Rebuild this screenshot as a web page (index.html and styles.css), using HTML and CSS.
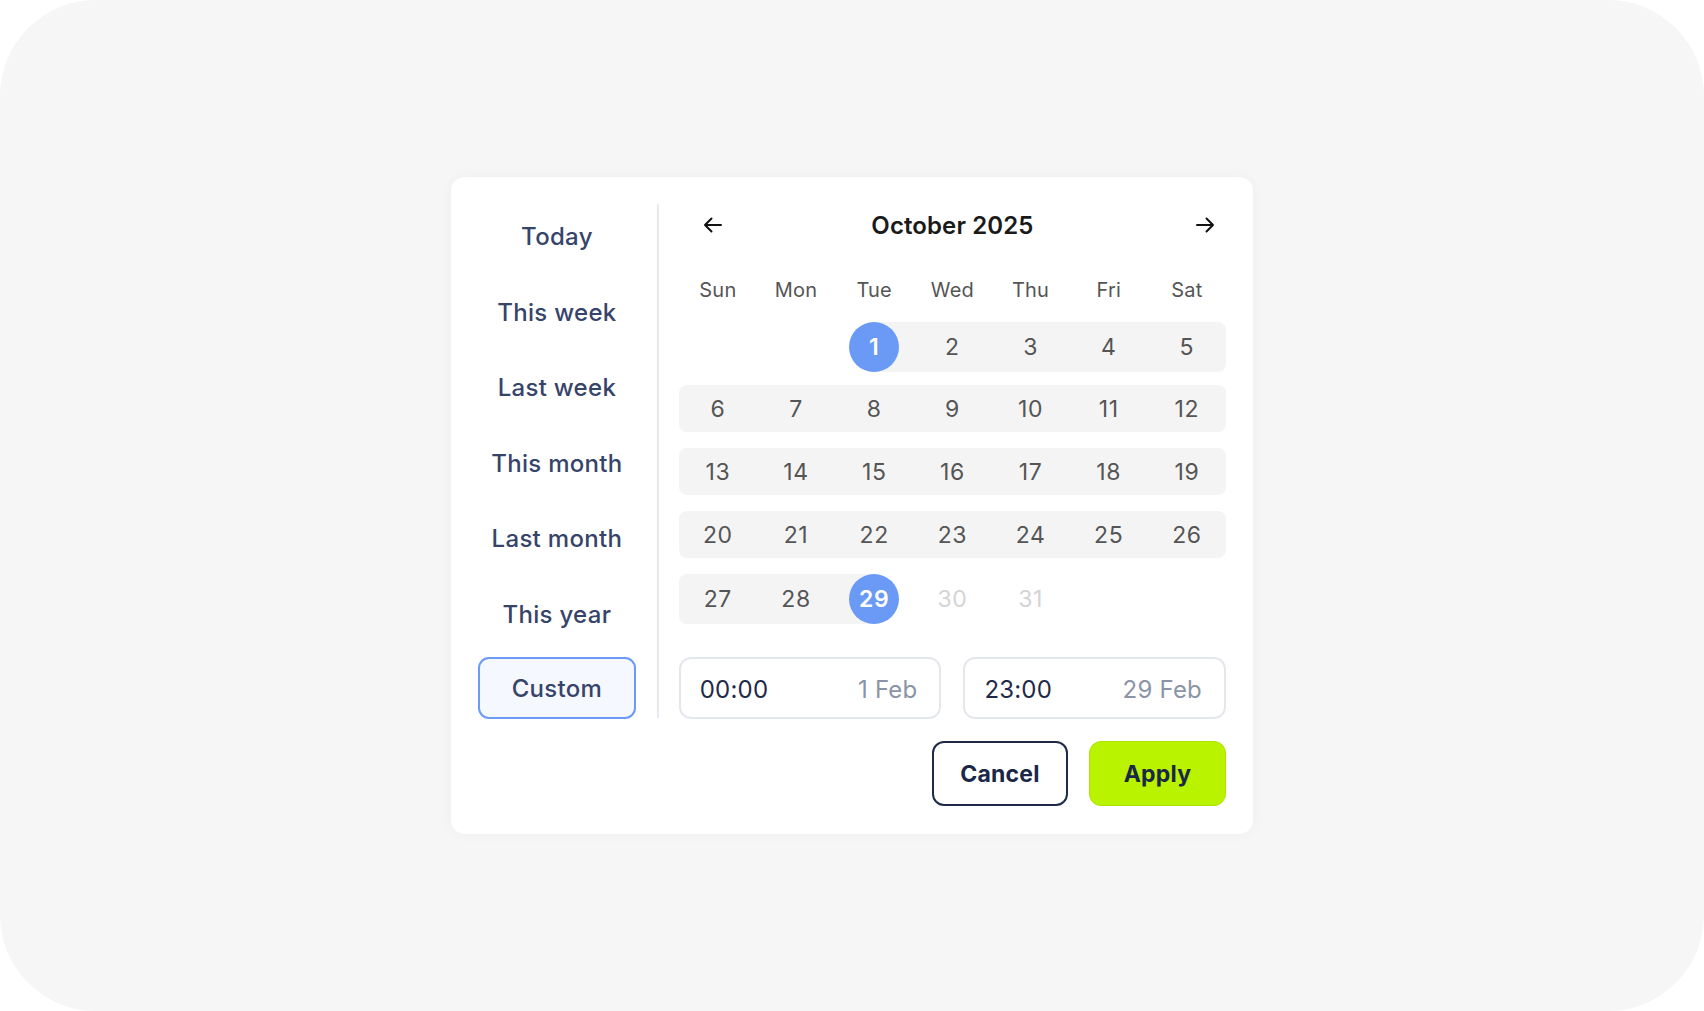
FILE: index.html
```html
<!DOCTYPE html>
<html lang="en">
<head>
<meta charset="utf-8">
<title>Date range picker</title>
<link rel="stylesheet" href="styles.css">
</head>
<body>
<div class="frame">
  <div class="card">
    <nav class="presets">
      <div class="preset">Today</div>
      <div class="preset">This week</div>
      <div class="preset">Last week</div>
      <div class="preset">This month</div>
      <div class="preset">Last month</div>
      <div class="preset">This year</div>
      <div class="preset preset-active">Custom</div>
    </nav>
    <div class="divider"></div>
    <section class="calendar">
      <header class="cal-head">
        <button class="nav-btn nav-prev" aria-label="Previous month">
          <svg viewBox="0 0 24 24" width="24" height="24"><path d="M20 12H4M10.5 5.5L4 12l6.5 6.5" fill="none" stroke="#111" stroke-width="2" stroke-linecap="round" stroke-linejoin="round"/></svg>
        </button>
        <div class="cal-title">October 2025</div>
        <button class="nav-btn nav-next" aria-label="Next month">
          <svg viewBox="0 0 24 24" width="24" height="24"><path d="M4 12h16M13.5 5.5L20 12l-6.5 6.5" fill="none" stroke="#111" stroke-width="2" stroke-linecap="round" stroke-linejoin="round"/></svg>
        </button>
      </header>
      <div class="weekdays">
        <span>Sun</span><span>Mon</span><span>Tue</span><span>Wed</span><span>Thu</span><span>Fri</span><span>Sat</span>
      </div>
      <div class="weeks">
        <div class="week">
          <span class="day"></span>
          <span class="day"></span>
          <span class="day range-start"><span class="dot">1</span></span>
          <span class="day in-range">2</span>
          <span class="day in-range">3</span>
          <span class="day in-range">4</span>
          <span class="day in-range row-end">5</span>
        </div>
        <div class="week">
          <span class="day in-range row-start">6</span>
          <span class="day in-range">7</span>
          <span class="day in-range">8</span>
          <span class="day in-range">9</span>
          <span class="day in-range">10</span>
          <span class="day in-range">11</span>
          <span class="day in-range row-end">12</span>
        </div>
        <div class="week">
          <span class="day in-range row-start">13</span>
          <span class="day in-range">14</span>
          <span class="day in-range">15</span>
          <span class="day in-range">16</span>
          <span class="day in-range">17</span>
          <span class="day in-range">18</span>
          <span class="day in-range row-end">19</span>
        </div>
        <div class="week">
          <span class="day in-range row-start">20</span>
          <span class="day in-range">21</span>
          <span class="day in-range">22</span>
          <span class="day in-range">23</span>
          <span class="day in-range">24</span>
          <span class="day in-range">25</span>
          <span class="day in-range row-end">26</span>
        </div>
        <div class="week">
          <span class="day in-range row-start">27</span>
          <span class="day in-range">28</span>
          <span class="day range-end"><span class="dot">29</span></span>
          <span class="day muted">30</span>
          <span class="day muted">31</span>
          <span class="day"></span>
          <span class="day"></span>
        </div>
      </div>
      <div class="times">
        <div class="time-field"><span class="time">00:00</span><span class="date">1 Feb</span></div>
        <div class="time-field"><span class="time">23:00</span><span class="date">29 Feb</span></div>
      </div>
      <div class="actions">
        <button class="btn btn-cancel">Cancel</button>
        <button class="btn btn-apply">Apply</button>
      </div>
    </section>
  </div>
</div>
</body>
</html>
```

FILE: styles.css
```css
* { box-sizing: border-box; }

html, body {
  margin: 0;
  padding: 0;
  background: #ffffff;
}

body {
  font-family: "Inter", "Noto Sans", "Liberation Sans", sans-serif;
}

.frame {
  width: 1704px;
  height: 1011px;
  background: #f6f6f6;
  border-radius: 96px;
  display: flex;
  align-items: center;
  justify-content: center;
}

.card {
  width: 802px;
  background: #ffffff;
  border-radius: 14px;
  box-shadow: 0 0 14px rgba(0, 0, 0, 0.035);
  padding: 27px 27px 28px 27px;
  display: flex;
  align-items: flex-start;
}

/* presets sidebar */
.presets {
  width: 158px;
  display: flex;
  flex-direction: column;
  gap: 13.5px;
}

.preset {
  height: 62px;
  padding-top: 3px;
  display: flex;
  align-items: center;
  justify-content: center;
  font-size: 24px;
  font-weight: 500;
  letter-spacing: 0.3px;
  color: #36446a;
  border: 2px solid transparent;
  border-radius: 11px;
}

.preset-active {
  padding-top: 1px;
  border-color: #6b9bf6;
  background: #f6f8ff;
}

.divider {
  align-self: stretch;
  width: 2px;
  background: #e6e9ef;
  margin: 0 20px 88px 21px;
}

/* calendar */
.calendar {
  width: 548px;
  display: flex;
  flex-direction: column;
}

.cal-head {
  height: 42px;
  display: grid;
  grid-template-columns: 1fr auto 1fr;
  align-items: center;
}

.nav-btn {
  width: 24px;
  height: 24px;
  padding: 0;
  border: 0;
  background: none;
  display: flex;
}

.nav-prev { justify-self: start; margin-left: 22px; }
.nav-next { justify-self: end; margin-right: 9px; }

.cal-title {
  font-size: 24px;
  font-weight: 600;
  color: #1a1a1a;
  letter-spacing: 0.1px;
}

.weekdays {
  margin-top: 30px;
  height: 28px;
  display: grid;
  grid-template-columns: repeat(7, 1fr);
  align-items: center;
  text-align: center;
  font-size: 20px;
  letter-spacing: 0.2px;
  color: #555555;
}

.weeks {
  margin-top: 18px;
  display: flex;
  flex-direction: column;
  gap: 16px;
}

.week {
  height: 47px;
  display: grid;
  grid-template-columns: repeat(7, 1fr);
}

.day {
  display: flex;
  align-items: center;
  justify-content: center;
  font-size: 23px;
  letter-spacing: 0.6px;
  color: #555555;
}

.in-range { background: #f4f4f4; }
.row-start { border-radius: 8px 0 0 8px; }
.row-end { border-radius: 0 8px 8px 0; }
.range-start { background: linear-gradient(to right, transparent 50%, #f4f4f4 50%); }
.range-end { background: linear-gradient(to right, #f4f4f4 50%, transparent 50%); }
.muted { color: #d4d4d4; }

.dot {
  width: 50px;
  height: 50px;
  flex: none;
  border-radius: 50%;
  background: #6a9af5;
  color: #ffffff;
  font-weight: 600;
  display: flex;
  align-items: center;
  justify-content: center;
}

/* time fields */
.times {
  margin-top: 36px;
  display: flex;
  gap: 22px;
}

.time-field {
  flex: 1;
  height: 62px;
  border: 2px solid #e4e7ec;
  border-radius: 12px;
  display: flex;
  align-items: center;
  justify-content: space-between;
  padding: 2px 22px 0 19px;
  font-size: 24px;
  letter-spacing: 0.2px;
}

.time { color: #1e2a47; }
.date { color: #8b94a7; }

/* actions */
.actions {
  margin-top: 22px;
  display: flex;
  justify-content: flex-end;
  gap: 21px;
}

.btn {
  height: 65px;
  border-radius: 12px;
  font-family: inherit;
  font-size: 23px;
  font-weight: 700;
  letter-spacing: 0.2px;
  color: #1b2747;
  display: flex;
  align-items: center;
  justify-content: center;
  padding: 0;
}

.btn-cancel {
  width: 136px;
  background: #ffffff;
  border: 2px solid #1e2a47;
}

.btn-apply {
  width: 137px;
  background: #b9f300;
  border: 1px solid #ace300;
}
```
